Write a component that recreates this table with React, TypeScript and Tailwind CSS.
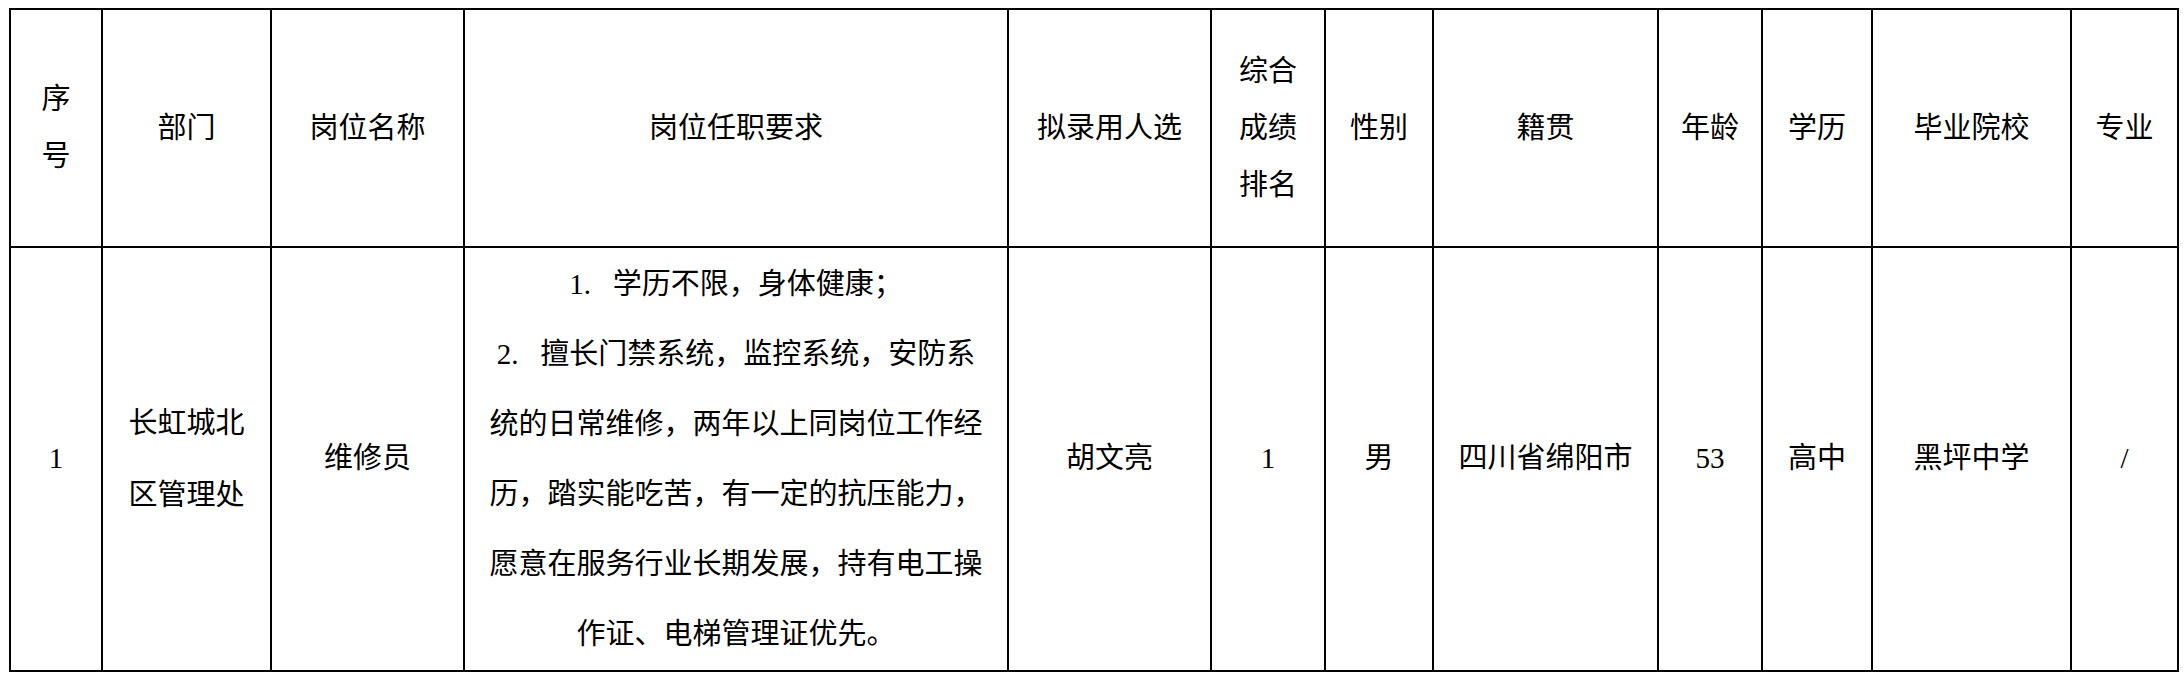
const cols = [92, 169, 193, 544, 203, 114, 108, 225, 104, 110, 199, 107];

const colClasses = [
  'w-[92px]',
  'w-[169px]',
  'w-[193px]',
  'w-[544px]',
  'w-[203px]',
  'w-[114px]',
  'w-[108px]',
  'w-[225px]',
  'w-[104px]',
  'w-[110px]',
  'w-[199px]',
  'w-[107px]',
];

const requirement = [
  '1.\u00a0\u00a0\u00a0学历不限，身体健康；',
  '2.\u00a0\u00a0\u00a0擅长门禁系统，监控系统，安防系',
  '统的日常维修，两年以上同岗位工作经',
  '历，踏实能吃苦，有一定的抗压能力，',
  '愿意在服务行业长期发展，持有电工操',
  '作证、电梯管理证优先。',
];

function Lines({ lines, leading }: { lines: string[]; leading: string }) {
  return (
    <div className={leading}>
      {lines.map((l) => (
        <div key={l} className="whitespace-nowrap">
          {l}
        </div>
      ))}
    </div>
  );
}

export default function App() {
  const cell = 'border-2 border-black text-center align-middle p-0 font-normal';
  const headers: string[][] = [
    ['序', '号'],
    ['部门'],
    ['岗位名称'],
    ['岗位任职要求'],
    ['拟录用人选'],
    ['综合', '成绩', '排名'],
    ['性别'],
    ['籍贯'],
    ['年龄'],
    ['学历'],
    ['毕业院校'],
    ['专业'],
  ];

  return (
    <div
      className="min-h-[679px] bg-white pl-[9px] pt-[8px] text-black text-[29px]"
      style={{ fontFamily: '"Liberation Serif", "Noto Sans CJK SC", serif' }}
    >
      <table className="table-fixed border-collapse w-[2170px]">
        <colgroup>
          {cols.map((_, i) => (
            <col key={i} className={colClasses[i]} />
          ))}
        </colgroup>
        <thead>
          <tr className="h-[238px]">
            {headers.map((h, i) => (
              <th key={i} className={cell}>
                <Lines lines={h} leading="leading-[57px]" />
              </th>
            ))}
          </tr>
        </thead>
        <tbody>
          <tr className="h-[424px]">
            <td className={cell}>1</td>
            <td className={cell}>
              <Lines lines={['长虹城北', '区管理处']} leading="leading-[72px]" />
            </td>
            <td className={cell}>维修员</td>
            <td className={cell}>
              <Lines lines={requirement} leading="leading-[70px]" />
            </td>
            <td className={cell}>胡文亮</td>
            <td className={cell}>1</td>
            <td className={cell}>男</td>
            <td className={cell}>四川省绵阳市</td>
            <td className={cell}>53</td>
            <td className={cell}>高中</td>
            <td className={cell}>黑坪中学</td>
            <td className={cell}>/</td>
          </tr>
        </tbody>
      </table>
    </div>
  );
}
